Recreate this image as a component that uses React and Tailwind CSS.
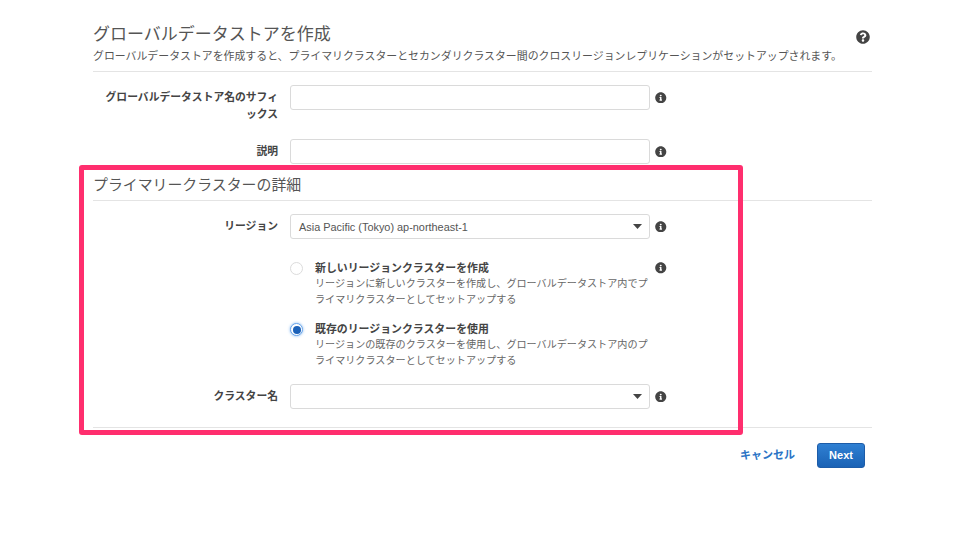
import React from "react";
import { FaInfoCircle, FaQuestionCircle } from "react-icons/fa";

const font = "[font-family:'Liberation_Sans','Noto_Sans_CJK_JP',sans-serif]";

function Info() {
  return <FaInfoCircle className="text-[#444] text-[11.5px] shrink-0" />;
}

function Caret() {
  return (
    <svg width="9" height="5" viewBox="0 0 9 5" className="shrink-0">
      <path d="M0 0H9L4.5 5Z" fill="#444" />
    </svg>
  );
}

function Field({ label, children, className = "" }) {
  return (
    <div className={`flex items-start ${className}`}>
      <div className="w-[185px] text-right text-[10.8px] leading-[17px] font-bold text-[#444] pt-[4px] shrink-0">{label}</div>
      <div className="ml-[12px] w-[360px] shrink-0">{children}</div>
      <div className="ml-[5px] h-[25px] flex items-center"><Info /></div>
    </div>
  );
}

function Box({ children, caret }) {
  return (
    <div className="h-[25px] border border-[#dadada] rounded-[3px] bg-white flex items-center justify-between pl-[8px] pr-[7px] text-[10.9px] text-[#555]">
      <span className="pt-[1px]">{children}</span>
      {caret && <Caret />}
    </div>
  );
}

function Radio({ checked, title, line1, line2, info, className = "" }) {
  return (
    <div className={`flex items-start ${className}`}>
      <div className="w-[185px] shrink-0" />
      <div className="ml-[12px] w-[360px] shrink-0 flex items-start">
        <div className="w-[25px] shrink-0 pt-[2px]">
          {checked ? (
            <div className="w-[13px] h-[13px] rounded-full bg-white border border-[#6aa5ea] shadow-[0_0_3px_#7fb5f0] flex items-center justify-center">
              <div className="w-[8px] h-[8px] rounded-full bg-[#1c62b9]" />
            </div>
          ) : (
            <div className="w-[13px] h-[13px] rounded-full bg-white border border-[#dcdcdc]" />
          )}
        </div>
        <div>
          <div className="text-[10.9px] leading-[16px] font-bold text-[#444]">{title}</div>
          <div className="text-[10.1px] leading-[16px] text-[#666] whitespace-nowrap">{line1}</div>
          <div className="text-[10.1px] leading-[16px] text-[#666] whitespace-nowrap">{line2}</div>
        </div>
      </div>
      {info && <div className="ml-[5px] h-[16px] flex items-center"><Info /></div>}
    </div>
  );
}

export default function App() {
  return (
    <div className={`relative w-[960px] h-[540px] bg-white overflow-hidden ${font}`}>
      <div className="ml-[93px] w-[779px] pt-[23px]">
        <div className="flex justify-between">
          <div>
            <h1 className="text-[17px] leading-[24px] text-[#555]">グローバルデータストアを作成</h1>
            <p className="mt-[2px] text-[10.9px] leading-[14px] text-[#555] whitespace-nowrap">
              グローバルデータストアを作成すると、プライマリクラスターとセカンダリクラスター間のクロスリージョンレプリケーションがセットアップされます。
            </p>
          </div>
          <FaQuestionCircle className="text-[#444] text-[14px] mt-[7px] mr-[2px] shrink-0" />
        </div>
        <div className="mt-[8px] border-t border-[#e4e4e4]" />

        <Field
          label={<>グローバルデータストア名のサフィ<br />ックス</>}
          className="mt-[13px]"
        >
          <Box />
        </Field>
        <Field label="説明" className="mt-[16px]">
          <Box />
        </Field>

        <h2 className="mt-[10px] text-[14.9px] leading-[22px] text-[#555]">プライマリークラスターの詳細</h2>
        <div className="mt-[4px] border-t border-[#e4e4e4]" />

        <Field label="リージョン" className="mt-[13px]">
          <Box caret>Asia Pacific (Tokyo) ap-northeast-1</Box>
        </Field>

        <Radio
          className="mt-[21px]"
          info
          title="新しいリージョンクラスターを作成"
          line1="リージョンに新しいクラスターを作成し、グローバルデータストア内でプ"
          line2="ライマリクラスターとしてセットアップする"
        />
        <Radio
          className="mt-[13px]"
          checked
          title="既存のリージョンクラスターを使用"
          line1="リージョンの既存のクラスターを使用し、グローバルデータストア内のプ"
          line2="ライマリクラスターとしてセットアップする"
        />

        <Field label="クラスター名" className="mt-[15px]">
          <Box caret />
        </Field>

        <div className="mt-[18px] border-t border-[#e4e4e4]" />
        <div className="mt-[15px] flex justify-end items-center pr-[7px]">
          <span className="text-[11px] font-bold text-[#2a73c5]">キャンセル</span>
          <button className="ml-[22px] w-[48px] h-[25px] rounded-[3px] border border-[#1d5ca8] bg-gradient-to-b from-[#2f80d3] to-[#1a62b5] text-white text-[11px] font-bold">Next</button>
        </div>
      </div>

      <div className="absolute left-[79px] top-[165px] w-[664px] h-[270px] border-[5px] border-[#ff2e6e] rounded-[3px]" />
    </div>
  );
}
